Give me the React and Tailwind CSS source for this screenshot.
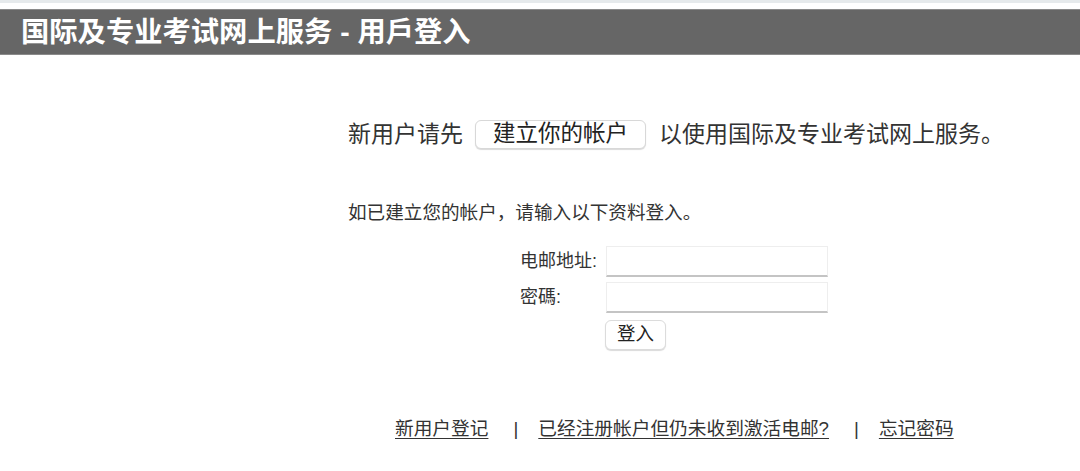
import React from "react";

const font = { fontFamily: '"Liberation Sans", "Noto Sans CJK SC", sans-serif' };

const App = () => {
  return (
    <div className="min-h-[471px] bg-white text-[#333]" style={font}>
      <div className="h-[3px] bg-[#e6eaec]" />
      <div className="h-[6px] bg-white" />
      <div className="h-[46px] bg-[#666] border-t border-b border-[#8a8a8a] flex items-center pl-[21px]">
        <h1 className="text-[28.3px] leading-none font-bold text-white">
          国际及专业考试网上服务 - 用戶登入
        </h1>
      </div>

      <div className="pl-[348px] pt-[64px]">
        <div className="flex items-center text-[23px] leading-none h-[30px]">
          <span>新用户请先</span>
          <button className="ml-[12px] mr-[13px] h-[29px] px-[17px] bg-white rounded-[6px] border border-[#d8d8d8] shadow-[0_1px_1px_rgba(0,0,0,0.15)] text-[22.5px] leading-none text-[#222]">
            建立你的帐户
          </button>
          <span>以使用国际及专业考试网上服务。</span>
        </div>

        <p className="mt-[55px] text-[18.6px] leading-none">
          如已建立您的帐户，请输入以下资料登入。
        </p>

        <div className="mt-[23px] ml-[172px] grid grid-cols-[86px_222px] gap-y-[5px] items-center text-[18px]">
          <label htmlFor="email">电邮地址:</label>
          <input
            id="email"
            type="text"
            className="h-[31px] bg-white border border-[#eee] border-b-[#c4c4c4] border-b-[2px]"
          />
          <label htmlFor="pw">密碼:</label>
          <input
            id="pw"
            type="password"
            className="h-[31px] bg-white border border-[#eee] border-b-[#c4c4c4] border-b-[2px]"
          />
          <span />
          <div className="pt-[2px]">
            <button className="h-[30px] w-[61px] -ml-px bg-white rounded-[6px] border border-[#dcdcdc] shadow-[0_1px_1px_rgba(0,0,0,0.15)] text-[18.5px] leading-none text-[#222]">
              登入
            </button>
          </div>
        </div>
      </div>

      <div className="mt-[70px] pl-[395px] flex items-center text-[18.7px] leading-none">
        <a href="#" className="underline underline-offset-[3px]">新用户登记</a>
        <span className="ml-[25px] mr-[20px]">|</span>
        <a href="#" className="underline underline-offset-[3px]">已经注册帐户但仍未收到激活电邮?</a>
        <span className="ml-[25px] mr-[20px]">|</span>
        <a href="#" className="underline underline-offset-[3px]">忘记密码</a>
      </div>
    </div>
  );
};

export default App;
